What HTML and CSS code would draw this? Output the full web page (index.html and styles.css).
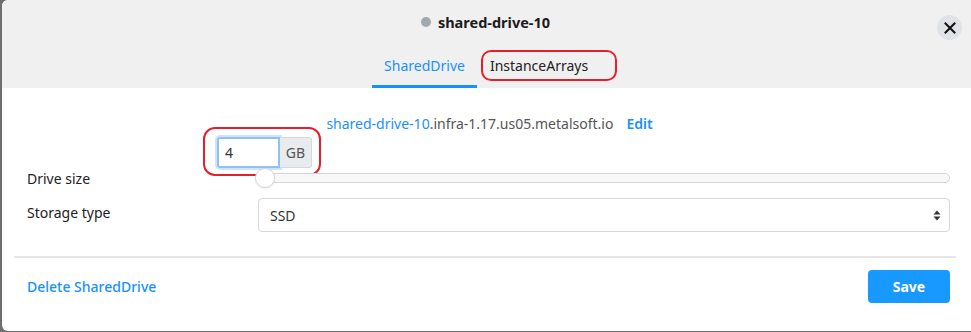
FILE: index.html
```html
<!DOCTYPE html>
<html>
<head>
<meta charset="utf-8">
<link rel="stylesheet" href="styles.css">
</head>
<body>
<div class="modal">
  <div class="header">
    <div class="title"><span class="dot"></span><span class="title-text">shared-drive-10</span></div>
    <div class="tabs">
      <div class="tab active">SharedDrive</div>
      <div class="tab-mark"><div class="tab">InstanceArrays</div></div>
    </div>
    <button class="close" type="button">
      <svg width="12" height="12" viewBox="0 0 12 12"><path d="M1.5 1.5 L10.5 10.5 M10.5 1.5 L1.5 10.5" stroke="#111" stroke-width="2" stroke-linecap="square"/></svg>
    </button>
  </div>
  <div class="body">
    <div class="host"><a class="host-link"><span class="blue">shared-drive-10</span>.infra-1.17.us05.metalsoft.io</a><a class="edit">Edit</a></div>
    <div class="mark-box">
      <div class="input-group"><div class="input">4</div><div class="addon">GB</div></div>
    </div>
    <div class="row row-size">
      <div class="label">Drive size</div>
      <div class="field">
        <div class="slider"><div class="thumb"></div></div>
      </div>
    </div>
    <div class="row row-type">
      <div class="label">Storage type</div>
      <div class="field">
        <div class="select"><span>SSD</span>
          <svg width="8" height="11" viewBox="0 0 8 11"><path d="M4 0.5 L7.5 4.5 L0.5 4.5 Z M4 10.5 L7.5 6.5 L0.5 6.5 Z" fill="#333"/></svg>
        </div>
      </div>
    </div>
    <div class="divider"></div>
    <div class="footer">
      <a class="delete">Delete SharedDrive</a>
      <button class="save" type="button">Save</button>
    </div>
  </div>
</div>
</body>
</html>
```

FILE: styles.css
```css
* { box-sizing: border-box; }
html, body { margin: 0; padding: 0; }
body {
  background: #6e6e6e;
  font-family: "Noto Sans", "Open Sans", sans-serif;
  font-size: 14px;
  color: #222;
  width: 971px;
  height: 332px;
  overflow: hidden;
}
.modal {
  margin-left: 2px;
  width: 969px;
  height: 331px;
  background: #fff;
  border-radius: 6px 0 0 6px;
  overflow: hidden;
}
.header {
  position: relative;
  background: #f0f0f0;
  height: 88px;
  display: flex;
  flex-direction: column;
  align-items: center;
  padding-top: 11px;
}
.title {
  display: flex;
  align-items: center;
  gap: 7px;
  height: 22px;
  margin-left: -2px;
}
.dot {
  width: 10px;
  height: 10px;
  border-radius: 50%;
  background: #a3a8b0;
}
.title-text {
  font-weight: 700;
  font-size: 14.5px;
  color: #1b1b1b;
}
.tabs {
  display: flex;
  margin-top: auto;
  margin-left: 16px;
  align-items: flex-end;
}
.tab {
  font-size: 14px;
  color: #222;
  padding: 0 11px;
  height: 55px;
  line-height: 42px;
}
.tab.active {
  color: #1890ff;
  border-bottom: 3px solid #1890ff;
  height: 33px;
  line-height: 22px;
  padding: 0 12px;
}
.tab-mark {
  margin-left: 4px;
  margin-bottom: 7px;
  border: 2px solid #e3212b;
  border-radius: 10px;
  height: 31px;
  width: 136px;
  display: flex;
  align-items: center;
}
.tab-mark .tab {
  height: auto;
  line-height: 20px;
  padding: 0 0 0 7px;
}
.close {
  position: absolute;
  right: 9px;
  top: 15px;
  width: 25px;
  height: 25px;
  border-radius: 50%;
  border: none;
  background: #e0e2e7;
  display: flex;
  align-items: center;
  justify-content: center;
  padding: 0;
}
.body {
  padding: 26px 21px 0 25px;
}
.host {
  display: flex;
  justify-content: center;
  gap: 13px;
  height: 20px;
  line-height: 20px;
  padding-left: 2px;
}
.host-link { color: #555; }
.blue { color: #1890ff; }
.edit { color: #1890ff; font-weight: 600; }
.mark-box {
  margin-left: 176px;
  margin-top: -7px;
  width: 118px;
  height: 49px;
  border: 2px solid #e3212b;
  border-radius: 12px;
  padding: 8px 0 0 12px;
}
.input-group {
  display: flex;
  height: 31px;
}
.input {
  width: 63px;
  border: 2px solid #8fc1f5;
  border-radius: 3px 0 0 3px;
  box-shadow: 0 0 0 2px #cfe3f9;
  background: #fff;
  padding: 0 6px;
  line-height: 27px;
  color: #333;
}
.addon {
  width: 32px;
  background: #e9ecef;
  border: 1px solid #d6d9dc;
  border-left: none;
  border-radius: 0 3px 3px 0;
  text-align: center;
  line-height: 29px;
  color: #555;
}
.row {
  display: flex;
  align-items: center;
  width: 923px;
}
.label {
  width: 231px;
  flex: none;
  color: #222;
}
.field { flex: 1; min-width: 0; }
.row-size {
  margin-top: -8px;
  height: 20px;
}
.slider {
  position: relative;
  height: 10px;
  border: 1px solid #d4d4d4;
  border-radius: 5px;
  background: #f8f8f8;
}
.thumb {
  position: absolute;
  left: -4px;
  top: -6px;
  width: 20px;
  height: 20px;
  border-radius: 50%;
  background: #fff;
  border: 1px solid #d6d6d6;
  box-shadow: 0 1px 2px rgba(0,0,0,0.08);
}
.row-type {
  margin-top: 10px;
  align-items: flex-start;
}
.row-type .label { padding-top: 5px; }
.select {
  height: 34px;
  border: 1px solid #d8d8d8;
  border-radius: 4px;
  display: flex;
  align-items: center;
  justify-content: space-between;
  padding: 0 8px 0 11px;
  color: #333;
}
.divider {
  margin: 24px 0 0 -13px;
  width: 942px;
  height: 2px;
  background: #e6e6e6;
}
.footer {
  display: flex;
  justify-content: space-between;
  align-items: center;
  margin-top: 12px;
  width: 923px;
}
.delete { color: #1890ff; font-weight: 500; }
.save {
  width: 82px;
  height: 33px;
  border: none;
  border-radius: 4px;
  background: #1899ff;
  color: #fff;
  font-family: inherit;
  font-size: 14px;
  font-weight: 700;
}
```
